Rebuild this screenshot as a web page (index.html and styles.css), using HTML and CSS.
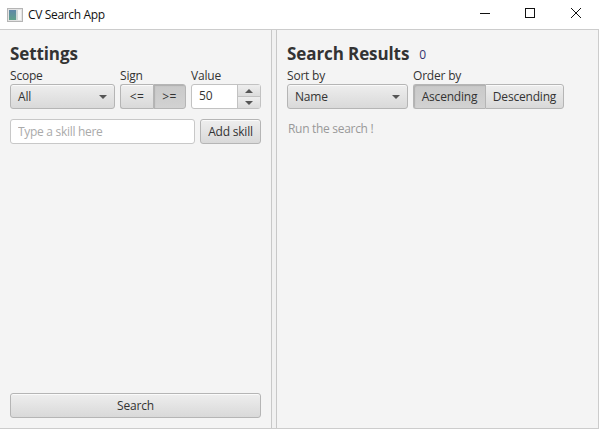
FILE: index.html
```html
<!DOCTYPE html>
<html lang="en">
<head>
    <meta charset="UTF-8">
    <meta name="viewport" content="width=device-width, initial-scale=1.0">
    <title>CV Search App</title>
    <link rel="stylesheet" href="styles.css">
</head>
<body>
    <header class="titlebar">
        <svg class="app-icon" width="16" height="14" viewBox="0 0 16 14">
            <defs>
                <linearGradient id="icon-fill" x1="0" y1="0" x2="0" y2="1">
                    <stop offset="0" stop-color="#5f86a8"/>
                    <stop offset="1" stop-color="#5fa08a"/>
                </linearGradient>
            </defs>
            <rect x="0.5" y="0.5" width="15" height="13" fill="#e4e4e4" stroke="#b5b5b5"/>
            <rect x="2" y="2" width="7" height="10" fill="url(#icon-fill)"/>
            <rect x="9" y="2" width="2" height="10" fill="#cfd6d6"/>
            <rect x="11" y="2" width="3" height="10" fill="#f6f6f6"/>
        </svg>
        <span class="app-title">CV Search App</span>
        <div class="window-buttons">
            <svg width="46" height="29" viewBox="0 0 46 29"><path d="M19 13.5h10" stroke="#111" fill="none"/></svg>
            <svg width="46" height="29" viewBox="0 0 46 29"><rect x="18.5" y="8.5" width="9" height="9" stroke="#111" fill="none"/></svg>
            <svg width="46" height="29" viewBox="0 0 46 29"><path d="M18 8l10 10M28 8l-10 10" stroke="#111" fill="none"/></svg>
        </div>
    </header>

    <div class="split">
        <section class="panel settings">
            <h2>Settings</h2>
            <div class="controls">
                <div class="field scope">
                    <label>Scope</label>
                    <div class="combo">All<span class="arrow"></span></div>
                </div>
                <div class="field sign">
                    <label>Sign</label>
                    <div class="toggle-group">
                        <button class="toggle le">&lt;=</button>
                        <button class="toggle selected">&gt;=</button>
                    </div>
                </div>
                <div class="field value">
                    <label>Value</label>
                    <div class="spinner">
                        <div class="spinner-text">50</div>
                        <div class="spinner-buttons">
                            <div class="spin-btn"><span class="arrow up"></span></div>
                            <div class="spin-btn"><span class="arrow"></span></div>
                        </div>
                    </div>
                </div>
            </div>
            <div class="skill-row">
                <input class="skill-input" type="text" placeholder="Type a skill here">
                <button class="btn add-skill">Add skill</button>
            </div>
            <button class="btn search-btn">Search</button>
        </section>

        <div class="divider"></div>

        <section class="panel results">
            <div class="results-head">
                <h2>Search Results</h2>
                <span class="count">0</span>
            </div>
            <div class="controls">
                <div class="field sort">
                    <label>Sort by</label>
                    <div class="combo">Name<span class="arrow"></span></div>
                </div>
                <div class="field order">
                    <label>Order by</label>
                    <div class="toggle-group">
                        <button class="toggle selected asc">Ascending</button>
                        <button class="toggle desc">Descending</button>
                    </div>
                </div>
            </div>
            <p class="hint">Run the search !</p>
        </section>
    </div>
</body>
</html>
```

FILE: styles.css
```css
* {
    box-sizing: border-box;
}
html, body {
    height: 100%;
}
body {
    margin: 0;
    display: flex;
    flex-direction: column;
    background: #f4f4f4;
    color: #333;
    font-family: "Open Sans", "Noto Sans", sans-serif;
    font-size: 12px;
    letter-spacing: -0.2px;
    overflow: hidden;
}
.titlebar {
    height: 30px;
    flex: none;
    display: flex;
    align-items: center;
    padding-left: 7px;
    background: #fff;
    border-bottom: 1px solid #ccc;
}
.app-icon {
    margin-right: 5px;
}
.app-title {
    color: #111;
    font-size: 12px;
    letter-spacing: -0.35px;
}
.window-buttons {
    margin-left: auto;
    display: flex;
    height: 29px;
}
.split {
    flex: 1;
    display: flex;
    min-height: 0;
    border-bottom: 1px solid #ccc;
    border-right: 1px solid #ccc;
}
.panel {
    display: flex;
    flex-direction: column;
    padding-top: 12px;
}
.settings {
    width: 271px;
    padding-left: 10px;
    padding-right: 10px;
    padding-bottom: 10px;
}
.results {
    flex: 1;
    padding-left: 10px;
}
.divider {
    width: 6px;
    background: #f1f1f1;
    border-left: 1px solid #c8c8c8;
    border-right: 1px solid #c8c8c8;
}
h2 {
    margin: 0;
    height: 24px;
    line-height: 24px;
    font-size: 17px;
    font-weight: 700;
    letter-spacing: -0.1px;
    color: #333;
}
.results-head {
    display: flex;
    align-items: center;
}
.count {
    margin-left: 10px;
    font-size: 12px;
    color: #33336e;
}
.controls {
    display: flex;
    gap: 5px;
}
.field label {
    display: block;
    height: 18px;
    line-height: 20px;
    font-size: 12px;
}
.scope { width: 105px; }
.sign { width: 66px; }
.value { width: 70px; }
.sort { width: 121px; }
.order { width: 151px; }

.combo, .btn, .toggle {
    border: 1px solid #b5b5b5;
    border-radius: 3px;
    background: linear-gradient(#eeeeee, #d9d9d9);
    color: #333;
    font-family: inherit;
    font-size: 12px;
    letter-spacing: inherit;
    box-shadow: inset 0 1px 0 #fafafa;
}
.combo {
    height: 25px;
    display: flex;
    align-items: center;
    justify-content: space-between;
    padding: 0 7px;
}
.arrow {
    display: block;
    width: 0;
    height: 0;
    border-left: 4px solid transparent;
    border-right: 4px solid transparent;
    border-top: 4px solid #555;
}
.arrow.up {
    border-top: none;
    border-bottom: 4px solid #555;
}
.toggle-group {
    display: flex;
    height: 25px;
}
.toggle {
    height: 25px;
    padding: 0;
    border-radius: 0;
    flex: 1;
}
.toggle:first-child {
    border-radius: 3px 0 0 3px;
    border-right: none;
}
.toggle:last-child {
    border-radius: 0 3px 3px 0;
}
.toggle.selected {
    background: linear-gradient(#c9c9c9, #d2d2d2);
    box-shadow: inset 1px 1px 1px #b0b0b0;
}
.sign .toggle {
    letter-spacing: 0.5px;
}
.le { flex: none; width: 33px; }
.asc { flex: none; width: 72px; }
.spinner {
    height: 25px;
    display: flex;
    border: 1px solid #c2c2c2;
    border-radius: 3px;
    background: #fff;
}
.spinner-text {
    width: 45px;
    padding-left: 7px;
    line-height: 22px;
}
.spinner-buttons {
    flex: 1;
    display: flex;
    flex-direction: column;
    border-left: 1px solid #c2c2c2;
}
.spin-btn {
    flex: 1;
    display: flex;
    align-items: center;
    justify-content: center;
    background: linear-gradient(#eeeeee, #dcdcdc);
}
.spin-btn + .spin-btn {
    border-top: 1px solid #c2c2c2;
}
.skill-row {
    display: flex;
    gap: 5px;
    margin-top: 10px;
}
.skill-input {
    width: 185px;
    height: 25px;
    padding: 0 7px;
    border: 1px solid #c8c8c8;
    border-radius: 3px;
    background: #fff;
    font-family: inherit;
    font-size: 12px;
    letter-spacing: -0.3px;
    outline: none;
}
.skill-input::placeholder {
    color: #aaa;
}
.btn {
    height: 25px;
    padding: 0;
}
.add-skill {
    flex: 1;
}
.search-btn {
    margin-top: auto;
    width: 100%;
}
.hint {
    margin: 11px 0 0 1px;
    color: #999;
    font-size: 12px;
    letter-spacing: -0.3px;
}
```
